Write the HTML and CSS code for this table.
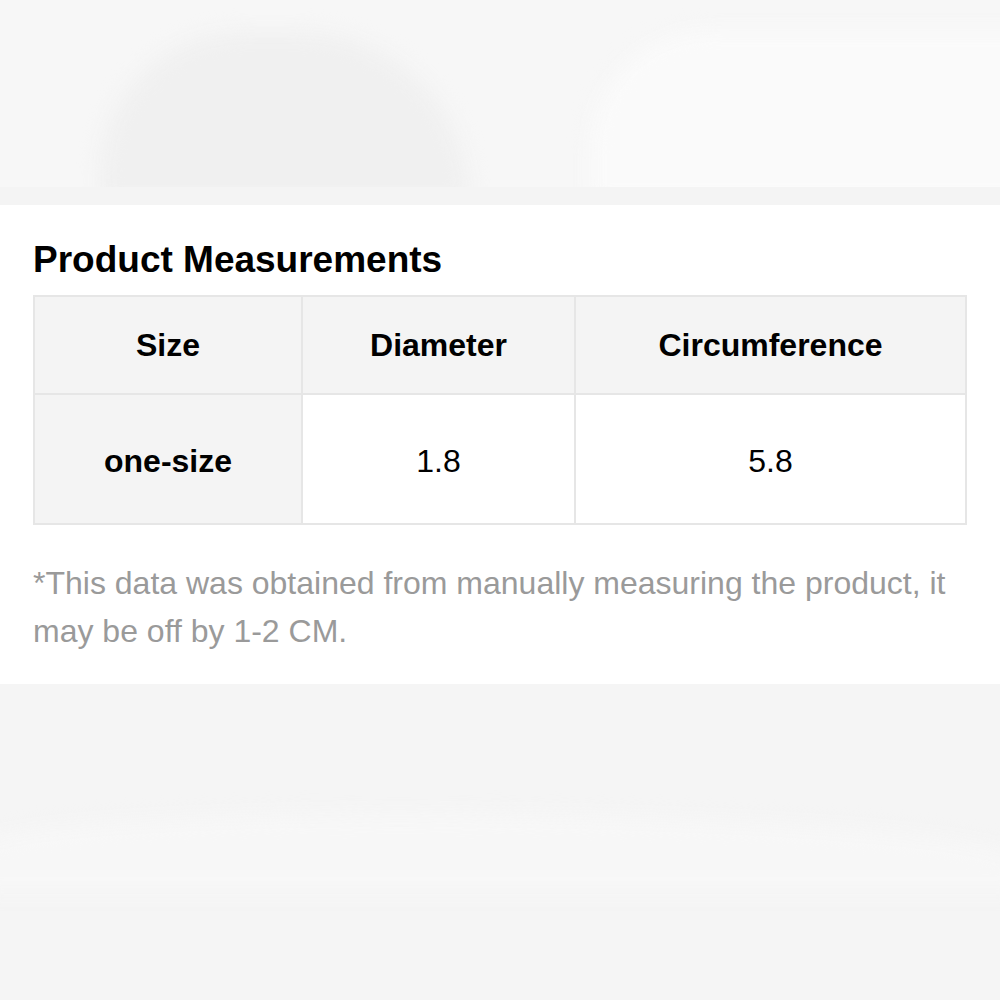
FILE: index.html
```html
<!DOCTYPE html>
<html>
<head>
  <meta charset="utf-8">
  <title>Product Measurements</title>
  <link rel="stylesheet" href="styles.css">
</head>
<body>
  <div class="photo-strip">
    <div class="blob blob-left"></div>
    <div class="blob blob-right"></div>
  </div>

  <div class="measure-section">
    <h2 class="measure-title">Product Measurements</h2>

    <table class="measure-table">
      <tr class="head-row">
        <th class="col-size">Size</th>
        <th class="col-diameter">Diameter</th>
        <th>Circumference</th>
      </tr>
      <tr class="body-row">
        <td class="col-size size-cell">one-size</td>
        <td>1.8</td>
        <td>5.8</td>
      </tr>
    </table>

    <p class="measure-note">*This data was obtained from manually measuring the product, it may be off by 1-2 CM.</p>
  </div>

  <div class="photo-strip bottom">
    <div class="wave"></div>
  </div>
</body>
</html>
```

FILE: styles.css
```css
/* Product page measurement block */
html, body {
  margin: 0;
  padding: 0;
  width: 100%;
  height: 100%;
  font-family: 'Liberation Sans', Arial, Helvetica, sans-serif;
  background: #f5f5f5;
  color: #000;
}

.photo-strip {
  position: relative;
  height: 205px;
  background: #f7f7f7;
  border-bottom: 18px solid #f4f4f4;
  box-sizing: border-box;
  overflow: hidden;
}

.blob {
  position: absolute;
  filter: blur(10px);
}

.blob-left {
  left: 100px;
  top: 32px;
  width: 370px;
  height: 170px;
  background: #f0f0f0;
  border-radius: 160px 190px 0 0;
}

.blob-right {
  left: 590px;
  top: 30px;
  width: 440px;
  height: 170px;
  background: #fafafa;
  border-radius: 120px 0 0 0;
}

.photo-strip.bottom {
  height: 317px;
  background: #f5f5f5;
  border-bottom: none;
}

.wave {
  position: absolute;
  left: -20px;
  right: -20px;
  top: 130px;
  height: 80px;
  background: #f7f7f7;
  filter: blur(10px);
  border-radius: 40% 60% 0 0;
}

.measure-section {
  background: #ffffff;
  padding: 33px 33px 29px 33px;
}

.measure-title {
  margin: 0 0 13px 0;
  font-size: 37px;
  line-height: 44px;
  font-weight: 700;
}

.measure-table {
  width: 100%;
  border-collapse: collapse;
  border: 2px solid #e6e6e6;
  table-layout: fixed;
}

.measure-table th,
.measure-table td {
  border: 2px solid #e6e6e6;
  text-align: center;
  vertical-align: middle;
  font-size: 32px;
  padding: 0;
}

.measure-table th {
  font-weight: 700;
  background: #f4f4f4;
}

.measure-table td {
  font-weight: 400;
  background: #ffffff;
  padding-top: 4px;
}

.head-row {
  height: 98px;
}

.body-row {
  height: 130px;
}

.col-size {
  width: 266px;
}

.col-diameter {
  width: 271px;
}

.measure-table td.size-cell {
  background: #f4f4f4;
  font-weight: 700;
}

.measure-note {
  margin: 34px 0 0 0;
  font-size: 32px;
  line-height: 48px;
  color: #9a9a9a;
}
```
